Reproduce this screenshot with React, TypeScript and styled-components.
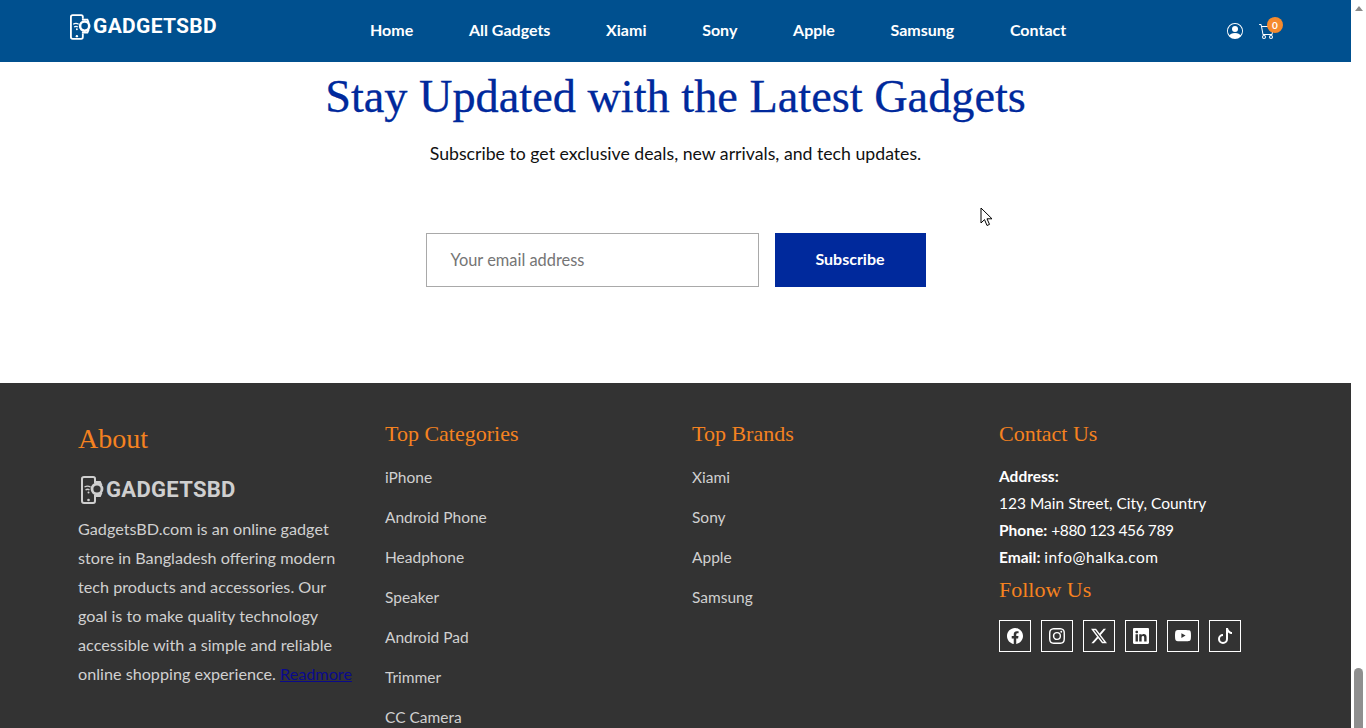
import React from 'react';
import styled, { createGlobalStyle } from 'styled-components';
import {
  BsCart,
  BsFacebook,
  BsInstagram,
  BsLinkedin,
  BsPersonCircle,
  BsTiktok,
  BsTwitterX,
  BsYoutube,
} from 'react-icons/bs';

const Global = createGlobalStyle`
  html, body {
    margin: 0;
    padding: 0;
    height: 728px;
    overflow: hidden;
    background: #fff;
    font-family: Lato, "Open Sans", sans-serif;
  }
  * { box-sizing: border-box; }
`;

const Page = styled.div`
  position: relative;
  display: flex;
  width: 1366px;
  height: 728px;
  overflow: hidden;
`;

const Main = styled.div`
  width: 1351px;
  height: 728px;
  display: flex;
  flex-direction: column;
  overflow: hidden;
`;

const Header = styled.header`
  flex: none;
  height: 62px;
  background: #00508f;
  display: flex;
  align-items: center;
  padding-left: 70px;
`;

const HeaderLogo = styled.div`
  width: 147px;
  margin-top: -9px;
`;

const LogoWrap = styled.a<{ $muted?: boolean }>`
  display: flex;
  align-items: center;
  gap: 2px;
  color: ${(p) => (p.$muted ? '#cfcfcf' : '#fff')};
`;

const LogoText = styled.span<{ $size: number }>`
  font-family: Roboto, sans-serif;
  font-weight: 700;
  font-size: ${(p) => p.$size}px;
  letter-spacing: 0.3px;
  line-height: 1;
`;

const Nav = styled.nav`
  display: flex;
  gap: 55.7px;
  margin-left: 153px;
  margin-top: -4px;
`;

const NavLink = styled.a`
  color: #fff;
  font-size: 16px;
  font-weight: 700;
`;

const HeaderIcons = styled.div`
  margin-left: auto;
  margin-right: 76px;
  display: flex;
  align-items: center;
  gap: 16px;
  color: #fff;
  font-size: 16px;
  height: 16px;
`;

const CartBox = styled.div`
  position: relative;
  width: 16px;
  height: 16px;
`;

const Badge = styled.span`
  position: absolute;
  top: -6px;
  right: -8px;
  width: 16px;
  height: 16px;
  border-radius: 50%;
  background: #f58a2e;
  color: #fff;
  font-size: 10px;
  font-weight: 700;
  line-height: 16px;
  text-align: center;
`;

const Subscribe = styled.section`
  flex: none;
  height: 321px;
  display: flex;
  flex-direction: column;
  align-items: center;
  background: #fff;
`;

const Title = styled.h2`
  margin: 7px 0 0;
  font-family: "Liberation Serif", serif;
  font-size: 46.3px;
  font-weight: 400;
  line-height: 56px;
  color: #00299c;
  -webkit-text-stroke: 0.3px #00299c;
`;

const Lead = styled.p`
  margin: 17px 0 0;
  font-size: 17.7px;
  line-height: 24px;
  color: #111;
`;

const SubscribeForm = styled.div`
  display: flex;
  gap: 16px;
  margin-top: 67px;
`;

const EmailBox = styled.div`
  width: 333px;
  height: 54px;
  border: 1px solid #a9a9a9;
  display: flex;
  align-items: center;
  padding: 0 0 1px 24px;
  font-size: 16.4px;
  color: #757575;
`;

const SubscribeButton = styled.button`
  width: 151px;
  height: 54px;
  border: 0;
  padding: 0 0 3px;
  background: #00299c;
  color: #fff;
  font-family: inherit;
  font-size: 16px;
  font-weight: 700;
`;

const Footer = styled.footer`
  flex: 1;
  background: #333;
  display: grid;
  grid-template-columns: repeat(4, 307px);
  padding: 36px 0 0 78px;
`;

const Column = styled.div`
  display: flex;
  flex-direction: column;
  align-items: flex-start;
`;

const AboutHeading = styled.h3`
  margin: 0;
  font-family: "Liberation Serif", serif;
  font-size: 28px;
  font-weight: 400;
  line-height: 40px;
  color: #f58220;
`;

const ColumnHeading = styled.h4<{ $top?: number }>`
  margin: ${(p) => p.$top ?? 0}px 0 0;
  font-family: "Liberation Serif", serif;
  font-size: 22px;
  font-weight: 400;
  line-height: 30px;
  color: #f58220;
`;

const AboutLogo = styled.div`
  margin: 17px 0 10px 3px;
`;

const AboutText = styled.p`
  margin: 0;
  width: 280px;
  font-size: 16.2px;
  line-height: 29px;
  color: #d0d0d0;
`;

const ReadMore = styled.a`
  color: #0a0a8c;
  text-decoration: underline;
`;

const LinkList = styled.ul`
  list-style: none;
  margin: 16px 0 0;
  padding: 0;
  display: flex;
  flex-direction: column;
  gap: 16px;
`;

const LinkItem = styled.li`
  font-size: 15.5px;
  line-height: 24px;
  color: #d0d0d0;
`;

const ContactLines = styled.div`
  margin-top: 14px;
  font-size: 15.5px;
  line-height: 27px;
  color: #fff;
  strong { font-weight: 700; }
`;

const Digits = styled.span`
  letter-spacing: -0.4px;
`;

const Mail = styled.span`
  letter-spacing: 0.5px;
`;

const Socials = styled.div`
  display: flex;
  gap: 10px;
  margin-top: 15px;
`;

const SocialBox = styled.a`
  width: 32px;
  height: 32px;
  border: 1px solid #fff;
  display: flex;
  align-items: center;
  justify-content: center;
  color: #fff;
  font-size: 16px;
`;

const ScrollTrack = styled.div`
  width: 15px;
  height: 728px;
  background: #fff;
  display: flex;
  flex-direction: column;
  align-items: center;
`;

const ScrollArrow = styled.div`
  margin-top: 6px;
  width: 0;
  height: 0;
  border-left: 4px solid transparent;
  border-right: 4px solid transparent;
  border-bottom: 5px solid #8a8a8a;
`;

const ScrollThumb = styled.div`
  margin-top: auto;
  width: 9px;
  height: 60px;
  background: #8f8f8f;
  border-radius: 5px 5px 0 0;
`;

const Cursor = styled.svg`
  position: absolute;
  left: 980px;
  top: 207px;
`;

const PhoneMark = () => (
  <svg width="23" height="28" viewBox="0 0 23 28" fill="none">
    <path d="M14 5V2.8C14 1.8 13.2 1 12.2 1H3C2 1 1 1.8 1 2.8V25C1 26.2 2 27 3 27H12.2C13.2 27 14 26.2 14 25V21" stroke="currentColor" strokeWidth="2" />
    <circle cx="7.5" cy="24" r="1.3" fill="currentColor" />
    <circle cx="16" cy="13" r="5" stroke="currentColor" strokeWidth="2.8" />
    <path d="M13 6H19L20.5 9.5M13 20H19L20.5 16.5" stroke="currentColor" strokeWidth="2" />
    <path d="M3.5 11C5.5 9.8 7.5 9.8 9.5 11M4.5 14C5.9 13 7.3 13 8.5 14" stroke="currentColor" strokeWidth="1.3" />
    <circle cx="7.5" cy="16.5" r="1" fill="currentColor" />
  </svg>
);

const Logo: React.FC<{ muted?: boolean }> = ({ muted }) => (
  <LogoWrap $muted={muted}>
    <PhoneMark />
    <LogoText $size={muted ? 22 : 21}>GADGETSBD</LogoText>
  </LogoWrap>
);

const navItems = ['Home', 'All Gadgets', 'Xiami', 'Sony', 'Apple', 'Samsung', 'Contact'];
const categories = ['iPhone', 'Android Phone', 'Headphone', 'Speaker', 'Android Pad', 'Trimmer', 'CC Camera'];
const brands = ['Xiami', 'Sony', 'Apple', 'Samsung'];
const socials = [BsFacebook, BsInstagram, BsTwitterX, BsLinkedin, BsYoutube, BsTiktok];

const App: React.FC = () => (
  <Page>
    <Global />
    <Main>
      <Header>
        <HeaderLogo>
          <Logo />
        </HeaderLogo>
        <Nav>
          {navItems.map((item) => (
            <NavLink key={item}>{item}</NavLink>
          ))}
        </Nav>
        <HeaderIcons>
          <BsPersonCircle />
          <CartBox>
            <BsCart />
            <Badge>0</Badge>
          </CartBox>
        </HeaderIcons>
      </Header>

      <Subscribe>
        <Title>Stay Updated with the Latest Gadgets</Title>
        <Lead>Subscribe to get exclusive deals, new arrivals, and tech updates.</Lead>
        <SubscribeForm>
          <EmailBox>Your email address</EmailBox>
          <SubscribeButton>Subscribe</SubscribeButton>
        </SubscribeForm>
      </Subscribe>

      <Footer>
        <Column>
          <AboutHeading>About</AboutHeading>
          <AboutLogo>
            <Logo muted />
          </AboutLogo>
          <AboutText>
            GadgetsBD.com is an online gadget store in Bangladesh offering modern tech products and
            accessories. Our goal is to make quality technology accessible with a simple and
            reliable online shopping experience. <ReadMore>Readmore</ReadMore>
          </AboutText>
        </Column>
        <Column>
          <ColumnHeading>Top Categories</ColumnHeading>
          <LinkList>
            {categories.map((item) => (
              <LinkItem key={item}>{item}</LinkItem>
            ))}
          </LinkList>
        </Column>
        <Column>
          <ColumnHeading>Top Brands</ColumnHeading>
          <LinkList>
            {brands.map((item) => (
              <LinkItem key={item}>{item}</LinkItem>
            ))}
          </LinkList>
        </Column>
        <Column>
          <ColumnHeading>Contact Us</ColumnHeading>
          <ContactLines>
            <strong>Address:</strong>
            <br />
            123 Main Street, City, Country
            <br />
            <strong>Phone:</strong> <Digits>+880 123 456 789</Digits>
            <br />
            <strong>Email:</strong> <Mail>info@halka.com</Mail>
          </ContactLines>
          <ColumnHeading $top={4}>Follow Us</ColumnHeading>
          <Socials>
            {socials.map((Icon, i) => (
              <SocialBox key={i}>
                <Icon />
              </SocialBox>
            ))}
          </Socials>
        </Column>
      </Footer>
    </Main>
    <ScrollTrack>
      <ScrollArrow />
      <ScrollThumb />
    </ScrollTrack>
    <Cursor width="13" height="20" viewBox="0 0 13 20">
      <path d="M1 1V16L4.5 12.6L7 18.5L9.5 17.4L7 11.8H12Z" fill="#fff" stroke="#000" strokeWidth="1" />
    </Cursor>
  </Page>
);

export default App;
